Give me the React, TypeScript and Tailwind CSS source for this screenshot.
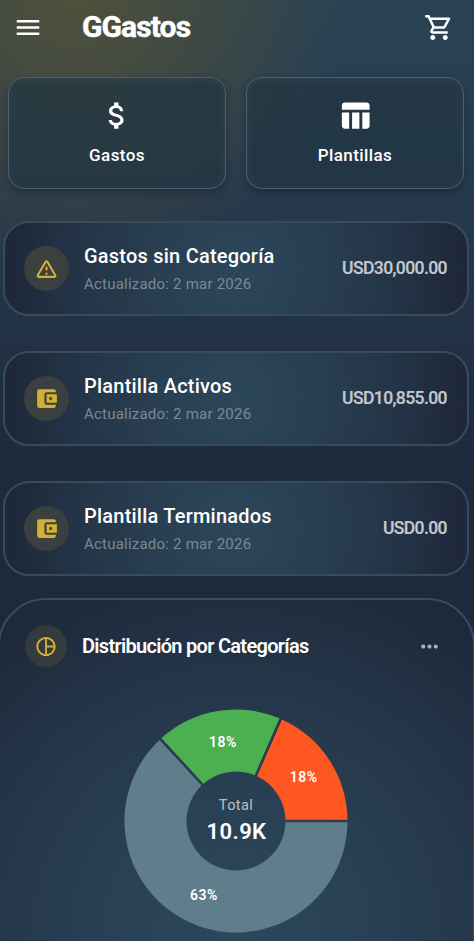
import React from 'react';
import { MdMenu, MdOutlineShoppingCart, MdAttachMoney, MdTableChart, MdAccountBalanceWallet, MdOutlinePieChart, MdMoreHoriz } from 'react-icons/md';

const WarningIcon = ({ size }: { size: number }) => (
  <svg width={size} height={size} viewBox="0 0 24 24" fill="currentColor">
    <path d="M12 5.99L19.53 19H4.47L12 5.99M2.74 18c-.77 1.33.19 3 1.73 3h15.06c1.54 0 2.5-1.67 1.73-3L13.73 4.99c-.77-1.33-2.69-1.33-3.46 0L2.74 18zM11 11v2c0 .55.45 1 1 1s1-.45 1-1v-2c0-.55-.45-1-1-1s-1 .45-1 1zm0 5h2v2h-2z" />
  </svg>
);

const summaries = [
  { title: 'Gastos sin Categoría', updated: '2 mar 2026', amount: 'USD30,000.00', icon: WarningIcon },
  { title: 'Plantilla Activos', updated: '2 mar 2026', amount: 'USD10,855.00', icon: MdAccountBalanceWallet },
  { title: 'Plantilla Terminados', updated: '2 mar 2026', amount: 'USD0.00', icon: MdAccountBalanceWallet },
];

const categories = [
  { value: 6855, color: '#607d8b' },
  { value: 2000, color: '#4caf50' },
  { value: 2000, color: '#ff5722' },
];

const OUTER = 111.5;
const INNER = 49.5;
const GAP = 1.3;

// Slice edges are shifted by GAP so that the space between slices keeps the same width
const slicePath = (start: number, end: number) => {
  const at = (r: number, angle: number, dir: number) => {
    const a = angle + dir * Math.asin(GAP / r);
    return `${(r * Math.cos(a)).toFixed(2)} ${(r * Math.sin(a)).toFixed(2)}`;
  };
  const large = end - start > Math.PI ? 1 : 0;
  return `M${at(OUTER, start, 1)} A${OUTER} ${OUTER} 0 ${large} 1 ${at(OUTER, end, -1)} L${at(INNER, end, -1)} A${INNER} ${INNER} 0 ${large} 0 ${at(INNER, start, 1)}Z`;
};

const DonutChart = () => {
  const total = categories.reduce((sum, c) => sum + c.value, 0);
  let angle = 0;
  const slices = categories.map((c) => {
    const start = angle;
    angle += (c.value / total) * Math.PI * 2;
    const mid = (start + angle) / 2;
    return {
      color: c.color,
      d: slicePath(start, angle),
      x: 80.5 * Math.cos(mid),
      y: 80.5 * Math.sin(mid),
      label: `${Math.round((c.value / total) * 100)}%`,
    };
  });

  return (
    <svg width="224" height="224" viewBox="-112 -112 224 224" className="block overflow-visible" textAnchor="middle">
      {slices.map((s, i) => (
        <g key={i}>
          <path d={s.d} fill={s.color} />
          <text x={s.x + 0.3} y={s.y + 5} fill="#fff" fontSize="14" fontWeight="600" letterSpacing="0.5">{s.label}</text>
        </g>
      ))}
      <text x="0" y="-11" fill="#b7c0c9" fontSize="14.5" letterSpacing="0.4">Total</text>
      <text x="0.5" y="18" fill="#fff" fontSize="22" fontWeight="600" letterSpacing="0.4">10.9K</text>
    </svg>
  );
};

const ActionButton = ({ label, icon: Icon }: any) => (
  <button className="flex h-[112px] flex-1 flex-col items-center rounded-[16px] border border-[#48626e] bg-[#213642]/75 pt-5 text-white shadow-[0_4px_9px_rgba(15,23,42,0.4),inset_0_2px_8px_rgba(75,110,120,0.2)]">
    <Icon size={35} className="-translate-x-[0.5px]" />
    <span className="mt-[10px] text-[17px] leading-6 font-medium tracking-[0.4px]">{label}</span>
  </button>
);

const SummaryCard = ({ title, updated, amount, icon: Icon }: any) => (
  <div className="flex h-[95px] items-center rounded-[26px] border-2 border-[#374c5b] bg-[radial-gradient(circle_225px_at_50%_50%,#2c475a_0%,#283d50_42%,#233345_75%,#1e283a_100%)] pr-[20px] pl-[19px]">
    <div className="flex size-[45px] shrink-0 items-center justify-center rounded-full bg-[#3a403e] text-[#d4af37]">
      <Icon size={25} />
    </div>
    <div className="ml-[15px] flex-1 pt-[3px]">
      <h3 className="text-[20px] leading-7 font-medium tracking-[0.22px] text-white">{title}</h3>
      <p className="text-[15px] leading-7 tracking-[0.22px] text-[#7b8995]">Actualizado: {updated}</p>
    </div>
    <span className="text-[17.5px] font-medium tracking-[-0.58px] text-[#c4c9d0] [-webkit-text-stroke:0.2px_#c4c9d0]">{amount}</span>
  </div>
);

export default function App() {
  return (
    <div className="h-[941px] w-full overflow-hidden bg-[radial-gradient(circle_270px_at_75px_0px,rgba(86,83,54,0.85)_0%,rgba(78,78,56,0.6)_45%,rgba(60,70,70,0)_100%),linear-gradient(180deg,#294354_0px,#283e52_120px,#253649_260px,#1f2b3e_440px,#1e293b_520px,#1e293b_100%)] font-['Roboto',sans-serif]">
      <header className="flex h-[77px] items-start pt-[12px] pr-5 pl-[12.5px] text-white">
        <MdMenu size={30} className="translate-y-[0.5px]" />
        <h1 className="ml-[39.5px] flex-1 text-[30px] leading-[30px] font-bold tracking-[-0.9px] [-webkit-text-stroke:0.5px_#fff]">GGastos</h1>
        <MdOutlineShoppingCart size={30} className="translate-y-[0.5px]" />
      </header>

      <div className="flex gap-5 pr-[10px] pl-2">
        <ActionButton label="Gastos" icon={MdAttachMoney} />
        <ActionButton label="Plantillas" icon={MdTableChart} />
      </div>

      <div className="mt-8 flex flex-col gap-[35px] pr-[5px] pl-[3px]">
        {summaries.map((s) => (
          <SummaryCard key={s.title} {...s} />
        ))}
      </div>

      <section className="-mr-px -ml-[2px] mt-[22px] h-[600px] rounded-t-[48px] border-2 border-[#384d5d] bg-[radial-gradient(circle_370px_at_50%_330px,#2c485a_0%,#293f54_38%,#243548_70%,#1e293b_100%)] pr-[24px] pl-[25px] pt-[25px]">
        <div className="flex items-center">
          <div className="flex size-[42px] items-center justify-center rounded-full bg-[#343b3c] text-[#d4af37]">
            <MdOutlinePieChart size={23} className="-translate-x-[0.5px]" />
          </div>
          <h2 className="ml-[15px] flex-1 text-[20px] font-semibold tracking-[-0.7px] text-white">Distribución por Categorías</h2>
          <MdMoreHoriz size={25} className="mr-[7px] text-[#a8b0b9]" />
        </div>
        <div className="mt-[42px] flex justify-center pr-[2px]">
          <DonutChart />
        </div>
      </section>
    </div>
  );
}
